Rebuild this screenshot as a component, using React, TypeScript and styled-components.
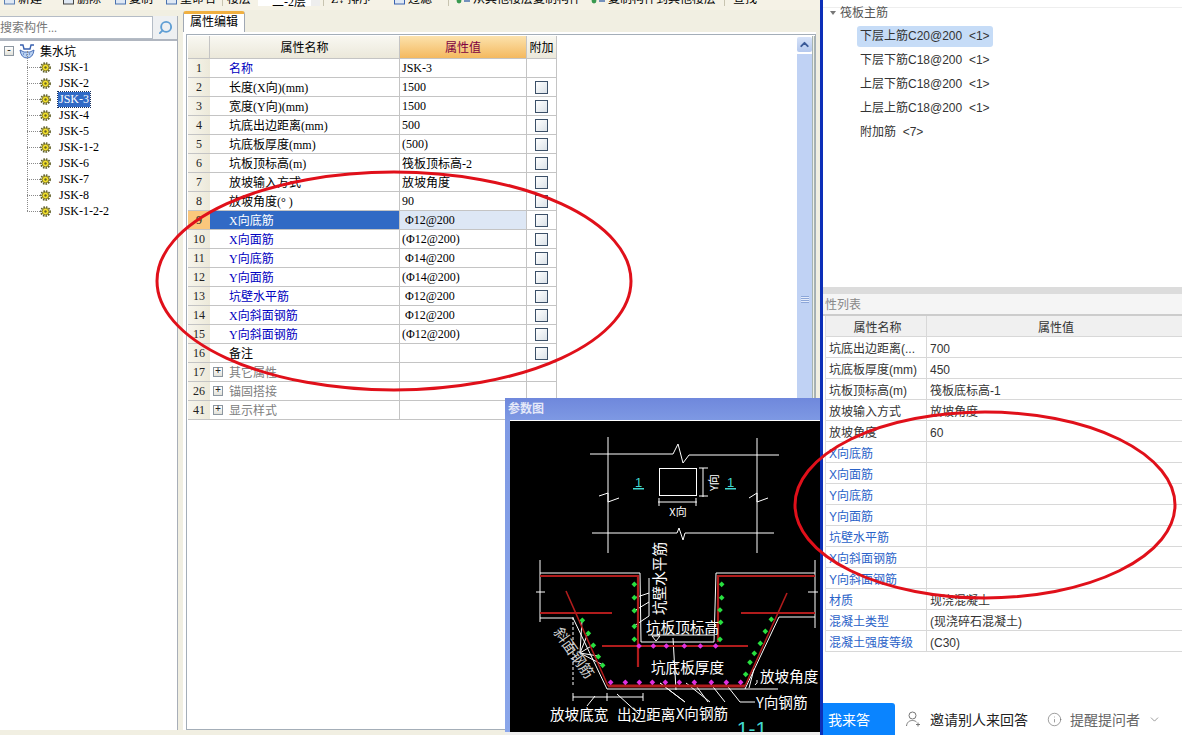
import React from 'react'
import styled, { createGlobalStyle } from 'styled-components'
import { Search, ChevronDown, ChevronUp, Info, ThumbsUp } from 'lucide-react'

const GlobalStyle = createGlobalStyle`
  html, body {
    margin: 0;
    padding: 0;
    width: 1182px;
    height: 735px;
    overflow: hidden;
    background: #fff;
  }
  * { box-sizing: border-box; }
`

const desktopFont = `"Liberation Serif", "Noto Sans CJK SC", serif`
const webFont = `"Liberation Sans", "Noto Sans CJK SC", sans-serif`

const Page = styled.div`
  position: relative;
  display: flex;
  width: 1182px;
  height: 735px;
  overflow: hidden;
  font-family: ${desktopFont};
  font-size: 12px;
  color: #000;
`

const LeftWindow = styled.div`
  display: flex;
  flex-direction: column;
  width: 820px;
  flex: none;
  background: #f1efe2;
`

const Toolbar = styled.div`
  display: flex;
  align-items: flex-end;
  height: 10px;
  flex: none;
  padding: 0 0 4px 4px;
  overflow: hidden;
  background: #f5f2e6;
  white-space: nowrap;
`

const ToolItem = styled.div<{ $w: number }>`
  display: flex;
  align-items: center;
  gap: 3px;
  width: ${({ $w }) => $w}px;
  flex: none;
  height: 14px;
  line-height: 14px;
`

const ToolSep = styled.div<{ $w: number }>`
  width: ${({ $w }) => $w}px;
  flex: none;
  height: 14px;
  border-left: 1px solid #c8c4b0;
  margin-left: 3px;
`

const ToolInput = styled.div`
  width: 62px;
  height: 14px;
  flex: none;
  background: linear-gradient(90deg, #fff 85%, #eee 85%);
  text-align: center;
`

const Body = styled.div`
  display: flex;
  flex: 1;
  min-height: 0;
  padding-bottom: 5px;
`

const TreePane = styled.div`
  display: flex;
  flex-direction: column;
  width: 178px;
  flex: none;
  margin-top: 6px;
  background: #fff;
  border-right: 1px solid #a8aeb8;
`

const SearchRow = styled.div`
  display: flex;
  height: 25px;
  flex: none;
  background: #eef0f2;
  border-bottom: 2px solid #b0b6c0;
`

const SearchInput = styled.div`
  width: 153px;
  height: 23px;
  background: #fff;
  border: 1px solid #b4bcc6;
  border-left: none;
  color: #777;
  line-height: 22px;
  font-size: 12px;
  white-space: nowrap;
  overflow: hidden;
`

const SearchButton = styled.div`
  display: flex;
  align-items: center;
  justify-content: center;
  flex: 1;
  color: #5f9ed4;

  svg {
    transform: scaleX(-1);
  }
`

const TreeRoot = styled.div`
  display: flex;
  align-items: center;
  height: 16px;
  margin-top: 2px;
  padding-left: 4px;

  svg {
    margin-left: 5px;
  }
`

const ExpandBox = styled.span`
  display: inline-flex;
  align-items: center;
  justify-content: center;
  width: 10px;
  height: 10px;
  flex: none;
  border: 1px solid #8c96a0;
  background: linear-gradient(#fff, #e2e2da);
  color: #222;
  font-family: "Liberation Mono", monospace;
  font-size: 10px;
  line-height: 8px;
`

const RootLabel = styled.span`
  margin-left: 5px;
  font-size: 12px;
`

const TreeList = styled.div`
  display: flex;
  flex-direction: column;
  padding-left: 27px;
`

const TreeItem = styled.div`
  position: relative;
  display: flex;
  align-items: center;
  height: 16px;
  padding-left: 13px;

  &::before {
    content: '';
    position: absolute;
    left: 0;
    top: 8px;
    width: 13px;
    border-top: 1px dotted #8a8a8a;
  }

  &::after {
    content: '';
    position: absolute;
    left: 0;
    top: -8px;
    height: 16px;
    border-left: 1px dotted #8a8a8a;
  }
`

const TreeText = styled.span<{ $selected?: boolean }>`
  margin-left: 7px;
  padding: 0 1px;
  height: 15px;
  line-height: 15px;
  background: ${({ $selected }) => ($selected ? '#316ac5' : 'transparent')};
  color: ${({ $selected }) => ($selected ? '#fff' : '#000')};
  outline: ${({ $selected }) => ($selected ? '1px dotted #18305c' : 'none')};
`

const EditPane = styled.div`
  display: flex;
  flex-direction: column;
  flex: 1;
  min-width: 0;
  margin: 1px 4px 0 5px;
`

const TabStrip = styled.div`
  display: flex;
  height: 21px;
  flex: none;
`

const Tab = styled.div`
  width: 62px;
  background: #fff;
  border: 1px solid #a0a8b4;
  border-top: 3px solid #f0b040;
  border-bottom: none;
  border-radius: 3px 3px 0 0;
  padding-left: 6px;
  line-height: 17px;
  font-size: 12px;
`

const TabBody = styled.div`
  flex: 1;
  min-height: 0;
  display: flex;
  background: #fff;
  padding: 2px 0 0 3px;
`

const TableFrame = styled.div`
  display: flex;
  flex: 1;
  min-width: 0;
  border: 1px solid #a4aeb8;
  padding: 1px 0 0 0;
`

const PropTable = styled.div`
  display: flex;
  flex-direction: column;
  width: 370px;
  flex: none;
  margin-left: 1px;
`

const PropRow = styled.div<{ $head?: boolean }>`
  display: grid;
  grid-template-columns: 22px 190px 127px 30px;
  height: ${({ $head }) => ($head ? 23 : 19)}px;
  flex: none;
`

const Cell = styled.div`
  display: flex;
  align-items: center;
  white-space: nowrap;
  overflow: hidden;
  border-right: 1px solid #c4c4c4;
  border-bottom: 1px solid #c4c4c4;
`

const NumCell = styled(Cell)<{ $active?: boolean }>`
  justify-content: center;
  background: ${({ $active }) => ($active ? '#fbc77c' : 'linear-gradient(90deg, #f7f5ec, #ece9da)')};
  color: #222;
  border-right: none;
`

const HeadCell = styled(Cell)<{ $accent?: boolean }>`
  justify-content: center;
  font-size: 12px;
  background: ${({ $accent }) =>
    $accent ? 'linear-gradient(#fce2ac, #f4b95f)' : 'linear-gradient(#f9f8f2, #ebe8da)'};
  color: ${({ $accent }) => ($accent ? '#800040' : '#000')};
`

const NameCell = styled(Cell)<{ $color: string; $active?: boolean }>`
  padding-left: 19px;
  background: ${({ $active }) => ($active ? '#316ac5' : '#fff')};
  color: ${({ $active, $color }) => ($active ? '#fff' : $color)};
`

const GroupCell = styled(Cell)`
  gap: 6px;
  padding-left: 3px;
  color: #808080;
`

const ValueCell = styled(Cell)<{ $active?: boolean }>`
  padding-left: 2px;
  white-space: pre;
  background: ${({ $active }) => ($active ? '#dde7f5' : '#fff')};
`

const CheckCell = styled(Cell)`
  justify-content: center;
  background: #fff;
`

const CheckBox = styled.span`
  width: 13px;
  height: 13px;
  border: 1px solid #3c5068;
  background: linear-gradient(135deg, #fff, #dbe2e8);
`

const Spacer = styled.div`
  flex: 1;
`

const ScrollBar = styled.div`
  display: flex;
  flex-direction: column;
  gap: 2px;
  width: 15px;
  flex: none;
  margin-top: 1px;
`

const ScrollButton = styled.div`
  display: flex;
  align-items: center;
  justify-content: center;
  height: 15px;
  flex: none;
  background: linear-gradient(#d6e2f8, #b4c8ee);
  border-radius: 2px;
  color: #3a5a98;
`

const ScrollThumb = styled.div`
  display: flex;
  align-items: center;
  justify-content: center;
  height: 490px;
  flex: none;
  background: #c0d2f4;
`

const Grip = styled.div`
  width: 8px;
  height: 7px;
  background: repeating-linear-gradient(#8ca6d8 0 1px, #e4ecfb 1px 2px);
`

const ScrollEdge = styled.div`
  width: 3px;
  flex: none;
  background: repeating-linear-gradient(90deg, #a8b4b0 0 1px, #eef0ea 1px 2px);
`

const Divider = styled.div`
  width: 3px;
  flex: none;
  background: #0c2fb8;
`

const RightPane = styled.div`
  display: flex;
  flex-direction: column;
  flex: 1;
  min-width: 0;
  background: #fff;
  font-family: ${webFont};
  font-size: 12px;
  color: #333;
`

const RebarPanel = styled.div`
  display: flex;
  flex-direction: column;
  height: 287px;
  flex: none;
  overflow: hidden;
`

const RebarHead = styled.div`
  display: flex;
  align-items: center;
  gap: 4px;
  height: 11px;
  flex: none;
  margin-top: 7px;
  padding-left: 7px;
  border-top: 1px solid #eee;
  color: #555;
  line-height: 11px;
`

const Caret = styled.span`
  width: 0;
  height: 0;
  border-left: 3px solid transparent;
  border-right: 3px solid transparent;
  border-top: 4px solid #777;
`

const RebarList = styled.div`
  display: flex;
  flex-direction: column;
  align-items: flex-start;
  gap: 3px;
  margin-top: 8px;
  padding-left: 34px;
`

const RebarItem = styled.div<{ $selected?: boolean }>`
  height: 21px;
  line-height: 21px;
  padding: 0 3px;
  border-radius: 3px;
  background: ${({ $selected }) => ($selected ? '#c6dcf7' : 'transparent')};
  white-space: pre;
`

const ListTitleBar = styled.div`
  height: 29px;
  flex: none;
  border-top: 7px solid #dcdcdc;
  border-bottom: 2px solid #ccc;
  background: #f5f5f5;
  padding-left: 2px;
  color: #888;
  line-height: 23px;
`

const AttrRow = styled.div<{ $head?: boolean }>`
  display: grid;
  grid-template-columns: 101px 1fr;
  height: 21px;
  flex: none;
  margin-left: 2px;
  background: ${({ $head }) => ($head ? '#f0f0f0' : '#fff')};
  text-align: ${({ $head }) => ($head ? 'center' : 'left')};
  line-height: 25px;
  border-left: 1px solid #ddd;
`

const AttrCell = styled.div<{ $blue?: boolean }>`
  padding-left: 3px;
  border-bottom: 1px solid #d8d8d8;
  white-space: nowrap;
  overflow: hidden;
  color: ${({ $blue }) => ($blue ? '#2a62c8' : '#333')};

  &:first-child {
    border-right: 1px solid #d8d8d8;
  }
`

const AnswerBar = styled.div`
  display: flex;
  align-items: center;
  height: 32px;
  flex: none;
  margin-top: auto;
  font-size: 14px;
  white-space: nowrap;
`

const AnswerButton = styled.div`
  width: 72px;
  height: 32px;
  flex: none;
  padding-left: 5px;
  line-height: 34px;
  background: #0a84ff;
  border-radius: 0 3px 0 0;
  color: #fff;
`

const InviteAction = styled.div`
  display: flex;
  align-items: center;
  margin-left: 11px;
  gap: 9px;
  color: #222;
`

const RemindAction = styled.div`
  display: flex;
  align-items: center;
  margin-left: 19px;
  gap: 8px;
  color: #666;
`

const LikeIcon = styled.div`
  display: flex;
  margin-left: 22px;
  color: #999;
`

const ParamWindow = styled.div`
  position: absolute;
  left: 505px;
  top: 398px;
  display: flex;
  flex-direction: column;
  width: 315px;
  height: 337px;
  padding-left: 5px;
  background: linear-gradient(#6f88dc 0, #7f9ae4 24px, #8aa6ea 100%);
  border-bottom: 3px solid #eee;
`

const ParamTitle = styled.div`
  height: 22px;
  flex: none;
  margin-left: -2px;
  padding-top: 1px;
  line-height: 21px;
  font-weight: bold;
  font-size: 12px;
  color: #e4e8f8;
`

const ParamCanvas = styled.div`
  flex: 1;
  min-height: 0;
  background: #000;
  border-top: 1px solid #fff;
  overflow: hidden;
`

const DiagramSvg = styled.svg`
  display: block;
`

const Annotations = styled.svg`
  position: absolute;
  left: 0;
  top: 0;
  pointer-events: none;
`

const toolItems: { label: string; w: number; color: string }[] = [
  { label: '新建', w: 59, color: '#5b7fb4' },
  { label: '删除', w: 52, color: '#444' },
  { label: '复制', w: 51, color: '#4a72b0' },
  { label: '重命名', w: 53, color: '#4a72b0' },
]

const BAR = 'Φ'

type RowData = { no: number; name: string; value?: string; blue?: boolean; check?: boolean; active?: boolean; group?: boolean }

const rows: RowData[] = [
  { no: 1, name: '名称', value: 'JSK-3', blue: true },
  { no: 2, name: '长度(X向)(mm)', value: '1500', check: true },
  { no: 3, name: '宽度(Y向)(mm)', value: '1500', check: true },
  { no: 4, name: '坑底出边距离(mm)', value: '500', check: true },
  { no: 5, name: '坑底板厚度(mm)', value: '(500)', check: true },
  { no: 6, name: '坑板顶标高(m)', value: '筏板顶标高-2', check: true },
  { no: 7, name: '放坡输入方式', value: '放坡角度', check: true },
  { no: 8, name: '放坡角度(° )', value: '90', check: true },
  { no: 9, name: 'X向底筋', value: ` ${BAR}12@200`, blue: true, check: true, active: true },
  { no: 10, name: 'X向面筋', value: `(${BAR}12@200)`, blue: true, check: true },
  { no: 11, name: 'Y向底筋', value: ` ${BAR}14@200`, blue: true, check: true },
  { no: 12, name: 'Y向面筋', value: `(${BAR}14@200)`, blue: true, check: true },
  { no: 13, name: '坑壁水平筋', value: ` ${BAR}12@200`, blue: true, check: true },
  { no: 14, name: 'X向斜面钢筋', value: ` ${BAR}12@200`, blue: true, check: true },
  { no: 15, name: 'Y向斜面钢筋', value: `(${BAR}12@200)`, blue: true, check: true },
  { no: 16, name: '备注', check: true },
  { no: 17, name: '其它属性', group: true },
  { no: 26, name: '锚固搭接', group: true },
  { no: 41, name: '显示样式', group: true },
]

const treeNames = ['JSK-1', 'JSK-2', 'JSK-3', 'JSK-4', 'JSK-5', 'JSK-1-2', 'JSK-6', 'JSK-7', 'JSK-8', 'JSK-1-2-2']

const rebars = ['下层上筋C20@200  <1>', '下层下筋C18@200  <1>', '上层下筋C18@200  <1>', '上层上筋C18@200  <1>', '附加筋  <7>']

const attrs: [string, string, boolean][] = [
  ['坑底出边距离(...', '700', false],
  ['坑底板厚度(mm)', '450', false],
  ['坑板顶标高(m)', '筏板底标高-1', false],
  ['放坡输入方式', '放坡角度', false],
  ['放坡角度', '60', false],
  ['X向底筋', '', true],
  ['X向面筋', '', true],
  ['Y向底筋', '', true],
  ['Y向面筋', '', true],
  ['坑壁水平筋', '', true],
  ['X向斜面钢筋', '', true],
  ['Y向斜面钢筋', '', true],
  ['材质', '现浇混凝土', true],
  ['混凝土类型', '(现浇碎石混凝土)', true],
  ['混凝土强度等级', '(C30)', true],
]

const GearIcon = () => (
  <svg width="11" height="11" viewBox="0 0 11 11">
    <circle cx="5.5" cy="5.5" r="4.6" fill="none" stroke="#5a5a20" strokeWidth="1.6" strokeDasharray="1.6 1.1" />
    <circle cx="5.5" cy="5.5" r="3.4" fill="#f2e02c" stroke="#6a6420" strokeWidth="0.8" />
    <circle cx="5.5" cy="5.5" r="1.2" fill="#6a6420" />
  </svg>
)

const PitIcon = () => (
  <svg width="16" height="16" viewBox="0 0 16 16">
    <path d="M1 2 L4 2 L5 6 L11 6 L12 2 L15 2" fill="none" stroke="#3a62b0" strokeWidth="1.4" />
    <path d="M1 7 Q2 15 8 15 Q14 15 15 7 L11 9 L5 9 Z" fill="#b8d0f0" stroke="#3a62b0" strokeWidth="0.9" />
    <path d="M4 11h1M7 12h1M10 11h1" stroke="#3a62b0" strokeWidth="1" />
  </svg>
)

const DocIcon = ({ color }: { color: string }) => (
  <svg width="11" height="12" viewBox="0 0 11 12">
    <rect x="0.5" y="0" width="10" height="11" fill="#dfe8f4" stroke={color} />
    <path d="M3 3h5M3 6h5" stroke={color} />
  </svg>
)

const BranchIcon = () => (
  <svg width="14" height="12" viewBox="0 0 14 12">
    <circle cx="3" cy="8" r="2.4" fill="#3a9a50" />
    <path d="M8 2h6M8 5h6M8 8h6" stroke="#4a72b0" strokeWidth="1.4" />
  </svg>
)

const InviteIcon = () => (
  <svg width="15" height="16" viewBox="0 0 15 16" fill="none" stroke="#777" strokeWidth="1">
    <circle cx="6.5" cy="4.5" r="3.5" />
    <path d="M0.5 15C1 11 3.5 9.5 6.5 9.5C8 9.5 9.5 10 10.5 11" />
    <path d="M12 11.5V15.5M10 13.5H14" />
  </svg>
)

const greenDots: [number, number][] = [
  [403, 73], [403, 113], [403, 152], [403, 199], [403, 238],
  [665, 73], [665, 113], [660, 150], [662, 187], [660, 238],
  [247, 181], [265, 220], [280, 256], [295, 290], [308, 316],
  [814, 178], [796, 214], [781, 250], [763, 280], [750, 307], [737, 343],
]

const pinkDots: [number, number][] = [
  [417, 258], [460, 258], [499, 258], [553, 258], [601, 258], [647, 258],
  [332, 367], [376, 367], [418, 367], [457, 367], [496, 367], [538, 367], [583, 367], [634, 367], [679, 367], [722, 367],
]

// zoomed crop coordinates of the lower drawing, back to page pixels
const zx = (v: number) => 500 + v / 3
const zy = (v: number) => 560 + v / 3

const cadFont = '"Noto Sans CJK SC", sans-serif'

const Diagram = () => (
  <DiagramSvg width="310" height="311" viewBox="510 421 310 311">
    <g fill="none" stroke="#fff" strokeWidth="1">
      {/* plan */}
      <path d="M590 454H673L678 444L683 463L689 455H779" />
      <path d="M592 533H677L679 528L683 540L685 533H774" />
      <path d="M608 437V553M757 438V553" />
      <path d="M599 496L608 493V502L619 498M749 498L757 493V502L768 498" />
      <rect x="659.5" y="468.5" width="37" height="27" />
      <path d="M703 468V497M699 468H708M699 496H708" />
      <path d="M658 502H697M659 498V506M696 498V506" />
      {/* section outline */}
      <path d="M540 560V622M815 560V628" />
      <path d="M540 573H640L641 642H714L716 573H815" />
      <path d="M540 618H573L607 689H745L779 617H815" />
      <path d="M745 689H778" />
      <path d="M573 617V686" strokeDasharray="3 2" />
      <path d="M536 592H545M808 592H818" />
      <path d="M573 697H643M573 693V701M607 693V701M643 693V701" />
      {/* leaders */}
      <path d="M649 578V616L634 626M649 593L634 598M649 602L634 611" />
      <path d="M580 653L582 620M580 653L588 633M580 653L593 645M580 653L598 656M580 653L603 665" />
      <path d="M673 638L676 690M648 635H714" />
      <path d="M660 683L685 702M686 683L710 702M694 683L708 702M710 683L725 702M725 683L740 702H755" />
      <path d="M595 696L587 706M617 694L640 715M660 683L685 702" />
      <path d="M754 669L749 688M755 685Q758 683 757 680" />
      <path d="M652 636H660L656 641Z" />
    </g>
    <g fill="none" stroke="#b01c1c">
      <path strokeWidth="2.2" d="M540 576H638V667M717 576H815M718 576V642" />
      <path strokeWidth="2" d="M540 613H612M741 613H815M602 646H748" />
      <path strokeWidth="1.6" d="M566 591L608 686M787 593L745 686" />
      <path strokeWidth="3" d="M608 686H745" />
    </g>
    {greenDots.map(([x, y]) => (
      <rect key={`${x}-${y}`} x={zx(x) - 2} y={zy(y) - 2} width="4" height="4" fill="#28e040" transform={`rotate(45 ${zx(x)} ${zy(y)})`} />
    ))}
    {pinkDots.map(([x, y]) => (
      <rect key={`${x}-${y}`} x={zx(x) - 2} y={zy(y) - 2} width="4" height="4" fill="#e030e0" transform={`rotate(45 ${zx(x)} ${zy(y)})`} />
    ))}
    <g fill="#fff" fontFamily={cadFont} fontSize="14.6">
      <text x="678" y="516" textAnchor="middle" fontSize="11">X向</text>
      <text transform="translate(718 491) rotate(-90)" fontSize="11">Y向</text>
      <text transform="translate(665 615) rotate(-90)">坑壁水平筋</text>
      <text x="646" y="633">坑板顶标高</text>
      <text x="651" y="673">坑底板厚度</text>
      <text x="760" y="682">放坡角度</text>
      <text x="756" y="708">Y向钢筋</text>
      <text x="550" y="720">放坡底宽</text>
      <text x="617" y="720">出边距离</text>
      <text x="676" y="719">X向钢筋</text>
      <text transform="translate(553 632) rotate(55)" fill="#d0d0d0">斜面钢筋</text>
    </g>
    <g fill="#40d8d0" fontFamily='"Liberation Sans", sans-serif'>
      <text x="638.5" y="487" textAnchor="middle" fontSize="13">1</text>
      <text x="730.5" y="487" textAnchor="middle" fontSize="13">1</text>
      <rect x="633" y="488" width="11" height="1.5" />
      <rect x="725" y="488" width="11" height="1.5" />
      <text x="752" y="736" textAnchor="middle" fontSize="21">1-1</text>
    </g>
  </DiagramSvg>
)

export default function App() {
  return (
    <Page>
      <GlobalStyle />
      <LeftWindow>
        <Toolbar>
          {toolItems.map((item) => (
            <ToolItem key={item.label} $w={item.w}>
              <DocIcon color={item.color} />
              {item.label}
            </ToolItem>
          ))}
          <ToolSep $w={5} />
          <ToolItem $w={31}>楼层</ToolItem>
          <ToolInput>二-2层</ToolInput>
          <ToolSep $w={8} />
          <ToolItem $w={63}>
            <span>Z↓</span>排序
          </ToolItem>
          <ToolItem $w={51}>
            <DocIcon color="#3a62b0" />
            过滤
          </ToolItem>
          <ToolSep $w={8} />
          <ToolItem $w={135}>
            <BranchIcon />
            从其他楼层复制构件
          </ToolItem>
          <ToolItem $w={130}>
            <BranchIcon />
            复制构件到其他楼层
          </ToolItem>
          <ToolSep $w={9} />
          <ToolItem $w={30}>查找</ToolItem>
        </Toolbar>
        <Body>
          <TreePane>
            <SearchRow>
              <SearchInput>搜索构件...</SearchInput>
              <SearchButton>
                <Search size={15} strokeWidth={3} />
              </SearchButton>
            </SearchRow>
            <TreeRoot>
              <ExpandBox>-</ExpandBox>
              <PitIcon />
              <RootLabel>集水坑</RootLabel>
            </TreeRoot>
            <TreeList>
              {treeNames.map((name) => (
                <TreeItem key={name}>
                  <GearIcon />
                  <TreeText $selected={name === 'JSK-3'}>{name}</TreeText>
                </TreeItem>
              ))}
            </TreeList>
          </TreePane>
          <EditPane>
            <TabStrip>
              <Tab>属性编辑</Tab>
            </TabStrip>
            <TabBody>
              <TableFrame>
                <PropTable>
                  <PropRow $head>
                    <HeadCell />
                    <HeadCell>属性名称</HeadCell>
                    <HeadCell $accent>属性值</HeadCell>
                    <HeadCell>附加</HeadCell>
                  </PropRow>
                  {rows.map((row) => (
                    <PropRow key={row.no}>
                      <NumCell $active={row.active}>{row.no}</NumCell>
                      {row.group ? (
                        <GroupCell>
                          <ExpandBox>+</ExpandBox>
                          {row.name}
                        </GroupCell>
                      ) : (
                        <NameCell $color={row.blue ? '#0000c0' : '#000'} $active={row.active}>
                          {row.name}
                        </NameCell>
                      )}
                      <ValueCell $active={row.active}>{row.value}</ValueCell>
                      <CheckCell>{row.check && <CheckBox />}</CheckCell>
                    </PropRow>
                  ))}
                </PropTable>
                <Spacer />
                <ScrollBar>
                  <ScrollButton>
                    <ChevronUp size={13} strokeWidth={3.5} />
                  </ScrollButton>
                  <ScrollThumb>
                    <Grip />
                  </ScrollThumb>
                </ScrollBar>
                <ScrollEdge />
              </TableFrame>
            </TabBody>
          </EditPane>
        </Body>
      </LeftWindow>
      <Divider />
      <RightPane>
        <RebarPanel>
          <RebarHead>
            <Caret />
            筏板主筋
          </RebarHead>
          <RebarList>
            {rebars.map((text, i) => (
              <RebarItem key={text} $selected={i === 0}>
                {text}
              </RebarItem>
            ))}
          </RebarList>
        </RebarPanel>
        <ListTitleBar>性列表</ListTitleBar>
        <AttrRow $head>
          <AttrCell>属性名称</AttrCell>
          <AttrCell>属性值</AttrCell>
        </AttrRow>
        {attrs.map(([name, value, blue]) => (
          <AttrRow key={name}>
            <AttrCell $blue={blue}>{name}</AttrCell>
            <AttrCell>{value}</AttrCell>
          </AttrRow>
        ))}
        <AnswerBar>
          <AnswerButton>我来答</AnswerButton>
          <InviteAction>
            <InviteIcon />
            邀请别人来回答
          </InviteAction>
          <RemindAction>
            <Info size={15} strokeWidth={1} />
            提醒提问者
            <ChevronDown size={13} strokeWidth={1.2} />
          </RemindAction>
          <LikeIcon>
            <ThumbsUp size={15} strokeWidth={1} />
          </LikeIcon>
        </AnswerBar>
      </RightPane>
      <ParamWindow>
        <ParamTitle>参数图</ParamTitle>
        <ParamCanvas>
          <Diagram />
        </ParamCanvas>
      </ParamWindow>
      <Annotations width="1182" height="735" viewBox="0 0 1182 735" fill="none" stroke="#e0101a" strokeWidth="3">
        <ellipse cx="394" cy="281" rx="237" ry="109" />
        <ellipse cx="985" cy="505" rx="190" ry="93" />
      </Annotations>
    </Page>
  )
}
